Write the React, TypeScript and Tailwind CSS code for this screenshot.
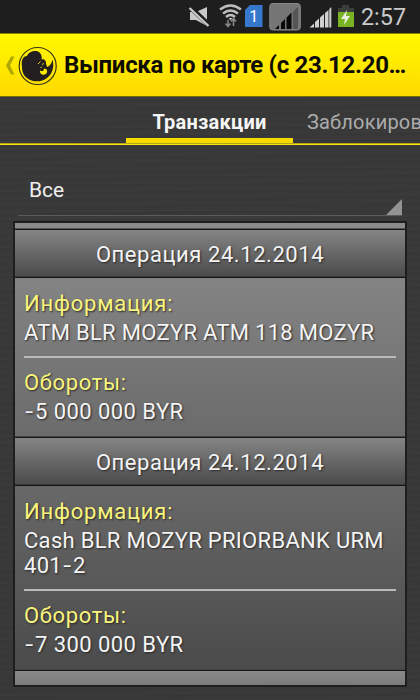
import React from 'react';

function StatusBar() {
  return (
    <div className="h-[33px] shrink-0 bg-[#1e1e1e] flex">
      <svg width="420" height="33" viewBox="0 0 420 33">
        <path d="M190 12h6l11-5v19l-11-6h-6z" fill="#c9c9c9" />
        <path d="M189 6l20 19" stroke="#1e1e1e" strokeWidth="5" />
        <path d="M189.500 8l19 18" stroke="#c9c9c9" strokeWidth="2.400" />
        <g fill="none" stroke="#bdbdbd" strokeWidth="2.4">
          <path d="M220 9.500Q230.500 1.500 241 9.500M223 13.500Q230.500 7.500 238 13.500M226 17Q230.500 13 235 17" />
        </g>
        <path d="M228.500 18h4l-2 2.500z" fill="#bdbdbd" />
        <path d="M228 26.500V20M225.500 23.500l2.500 3 2.500-3M233.500 19v7M231 21.500l2.500-3 2.500 3" fill="none" stroke="#858585" strokeWidth="1.600" />
        <path d="M250 5h12.500v22H245V10z" fill="#3678cc" />
        <text x="249.300" y="22" fontSize="16" fontFamily="Roboto, sans-serif" fill="#fff">1</text>
        <rect x="269.800" y="3.500" width="30.500" height="26.500" rx="3" fill="#757575" stroke="#8a8a8a" />
        <path d="M293 29V11.500l5-4.500v22z" fill="#555" />
        <path d="M275 29l4-4v4zM281 29v-6l4-4v10zM286.500 29V17.500l5-5V29z" fill="#090909" />
        <path d="M309.500 27.500l4.500-4v4zM315 27.500v-5.500l4-3.500v9zM320 27.500V17.500l4-3.500v13.500zM325 27.500V13l3.500-3v17.500zM329.300 27.500V9l2-2v20.500z" fill="#d0d0d0" />
        <path d="M342 5h7v3h5v5h-16V8h4z" fill="#3b3d3b" />
        <path d="M338 12h16v15h-16z" fill="#79b222" />
        <path d="M347 10l-6 9h4l-1 6 6-9h-4z" fill="#e8efe0" />
        <text x="361" y="24.500" fontSize="24" textLength="45" lengthAdjust="spacingAndGlyphs" fontFamily="Roboto, sans-serif" fill="#cacaca">2:57</text>
      </svg>
    </div>
  );
}

function Header() {
  return (
    <header className="h-[64px] shrink-0 flex items-center bg-gradient-to-b from-[#fff900] to-[#ffda00] border-b border-t border-t-[#8a8500] border-b-[#746a10]">
      <svg width="64" height="60" viewBox="0 34 64 60" className="shrink-0">
        <path d="M11 55.500h3.500L10 64.500l4.500 9H11l-5-9z" fill="#b0a700" />
        <circle cx="37.700" cy="65" r="18.500" fill="none" stroke="#37331a" strokeWidth="1.200" />
        <path d="M22 66C21 59 23 55 27 55C29 50 37 48.500 40 52C42 54.500 42 57 41.500 58.500C44 57.500 46.500 60 46 62.500L47 66C50 65 52 62 52.500 58.500C54.500 66 52.500 73 47 77C40 82.500 29 81 24 74C22.500 71.500 22 69 22 66Z" fill="#231f20" />
        <path d="M40.500 60.500l-2.500 2.500M43.500 62l-1 2M40.500 66.500l1.500-.5" fill="none" stroke="#d8c900" strokeWidth="1" />
        <path d="M40 69.500l2 .8 1.500-.8 .5-2 2.500.8q1.500 2 .2 4-1.700 2-4.500 1.200-2.500-1-2.200-4z" fill="#ffec00" />
      </svg>
      <h1 className="whitespace-nowrap text-[24px] leading-[30px] font-bold text-[#0e0c00] tracking-[-0.310px]">Выписка по карте (с 23.12.20…</h1>
    </header>
  );
}

function Tabs() {
  return (
    <nav className="h-[48px] shrink-0 flex overflow-hidden border-b-[1.500px] border-[#f7e412] whitespace-nowrap text-[20px] leading-[24px] shadow-[inset_0_-1px_0_#b7a418]">
      <div className="w-[126px] shrink-0" />
      <div className="w-[167px] shrink-0 h-[46px] pt-[13px] text-center font-bold text-[#f5f5f5] tracking-[0.240px] border-b-[5px] border-[#f9db00]">Транзакции</div>
      <div className="pl-[14px] pt-[13px] text-[#acacac] tracking-[0.180px]">Заблокиров</div>
    </nav>
  );
}

function SectionTitle() {
  return (
    <h2 className="h-[48px] shrink-0 flex items-center justify-center pt-[3px] border-b border-[#151515] bg-gradient-to-b from-[#858585] to-[#4b4b4b] shadow-[inset_0_-1px_0_#383838] text-[22px] leading-[26px] tracking-[0.560px]">
      Операция 24.12.2014
    </h2>
  );
}

function Dash() {
  return <span className="inline-block w-[11px] pl-[1px] origin-left scale-x-[1.300]">-</span>;
}

type OperationProps = { info: React.ReactNode; amount: string; tall?: boolean };

function Operation({ info, amount, tall }: OperationProps) {
  return (
    <section className={`shrink-0 px-[9px] pt-[12px] border-b border-[#151515] shadow-[inset_0_-1px_0_#444] ${tall ? 'h-[185px] bg-gradient-to-b from-[#686868] to-[#4b4b4b]' : 'h-[160px] bg-gradient-to-b from-[#848484] to-[#6b6b6b]'}`}>
      <div className="text-[#f9f47d] leading-[28px] tracking-[0.780px]">Информация:</div>
      <div className="leading-[25px] mt-[2px] tracking-[0.300px]">{info}</div>
      <div className="h-[2px] bg-[#bababa] mt-[11px]" />
      <div className="text-[#f9f47d] leading-[28px] mt-[11px] tracking-[0.650px]">Обороты:</div>
      <div className="leading-[25px] mt-[2px] tracking-[0.440px]"><Dash />{amount}</div>
    </section>
  );
}

export default function App() {
  return (
    <div className="w-[420px] h-[700px] overflow-hidden flex flex-col font-[Roboto,sans-serif] bg-[#393939] bg-[repeating-linear-gradient(179.500deg,#383838_0px,#3b3b3b_2px,#373737_4px,#393939_7px)]">
      <StatusBar />
      <Header />
      <Tabs />
      <div className="h-[71px] ml-[18px] mr-[18px] shrink-0 flex items-end justify-between border-b border-[#5b5b5b]">
        <span className="pl-[11px] pb-[12px] text-[21px] leading-[26px] text-[#f0f0f0]">Все</span>
        <svg width="16" height="16" viewBox="0 0 16 16"><path d="M16 0v16H0z" fill="#929292" /></svg>
      </div>
      <main className="mt-[5px] mx-[13px] h-[466px] shrink-0 overflow-hidden flex flex-col border-2 border-[#1e1e1e] text-[22px] text-[#f4f4f4] [text-shadow:1px_1px_2px_#292929]">
        <div className="h-[7px] shrink-0 bg-[#8b8b8b] border-b border-[#151515] shadow-[inset_0_-1px_0_#555]" />
        <SectionTitle />
        <Operation info="ATM BLR MOZYR ATM 118 MOZYR" amount="5 000 000 BYR" />
        <SectionTitle />
        <Operation info={<>Cash BLR MOZYR PRIORBANK URM<br />401<Dash />2</>} amount="7 300 000 BYR" tall />
        <div className="grow bg-gradient-to-b from-[#8a8a8a] to-[#7b7b7b]" />
      </main>
    </div>
  );
}
